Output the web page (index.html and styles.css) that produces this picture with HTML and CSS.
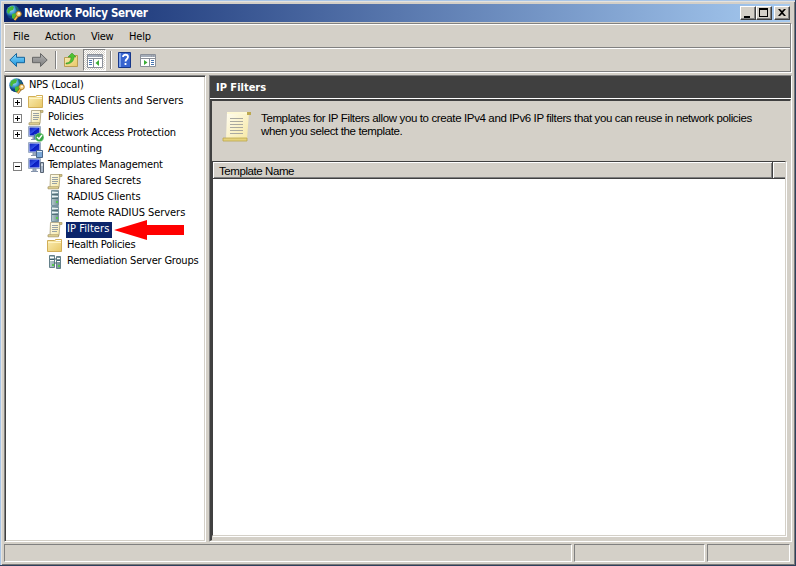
FILE: index.html
```html
<!DOCTYPE html>
<html lang="en">
<head>
<meta charset="utf-8">
<title>Network Policy Server</title>
<link rel="stylesheet" href="styles.css">
</head>
<body>
<svg class="defs" aria-hidden="true">
<defs>
<linearGradient id="paper" x2="1" y2="1"><stop stop-color="#fffdf0"/><stop offset="1" stop-color="#f6e8a4"/></linearGradient>
<linearGradient id="folder" x2="1" y2="1"><stop stop-color="#fbeeb4"/><stop offset="1" stop-color="#e8c766"/></linearGradient>
<linearGradient id="screen" x2="1" y2="1"><stop stop-color="#1020b8"/><stop offset=".45" stop-color="#2f50e8"/><stop offset=".5" stop-color="#0a1cc0"/><stop offset="1" stop-color="#2038d8"/></linearGradient>
<linearGradient id="steel" x2="1"><stop stop-color="#b8ccd0"/><stop offset="1" stop-color="#708c94"/></linearGradient>
<radialGradient id="sea" cx=".35" cy=".3"><stop stop-color="#b8e4f8"/><stop offset=".6" stop-color="#3c98d0"/><stop offset="1" stop-color="#0c4480"/></radialGradient>
<linearGradient id="blue" y2="1" x2="0"><stop stop-color="#8fdcfc"/><stop offset="1" stop-color="#1590dc"/></linearGradient>
<linearGradient id="grey" y2="1" x2="0"><stop stop-color="#b4b4b4"/><stop offset="1" stop-color="#7c7c7c"/></linearGradient>
<symbol id="globe" viewBox="0 0 16 16"><circle cx="7.3" cy="7.3" r="7" fill="url(#sea)"/><path d="M2 3l4-2 2 1-1 3-3 1-1 3-2-2zM6 9l4-1 1 3-3 3-2-1z" fill="#48b838"/><path d="M9 1l3 2 1 3-3-1z" fill="#1c6c70"/><path d="M8.500 15l3.500-4.500" stroke="#805008" stroke-width="2.800"/><path d="M8.500 15l3.500-4.500" stroke="#f0bc50" stroke-width="1.600"/><circle cx="12.600" cy="9" r="2.700" fill="#f8d078" stroke="#a06c18" stroke-width=".8"/><circle cx="13" cy="8.500" r=".9" fill="#fff"/></symbol>
<symbol id="dir" viewBox="0 0 16 16"><path d="M.5 2.500v11h14v-12h-6l-1 1z" fill="url(#folder)" stroke="#d1ae57"/><path d="M9 2.500h5" stroke="#fff"/><path d="M1 4.500h13" stroke="#fff4c4"/></symbol>
<symbol id="scroll" viewBox="0 0 16 16"><path d="M3.500 .5h9.500l-1 13h-9z" fill="url(#paper)" stroke="#a69c76" stroke-width=".8"/><path d="M12.500 .4h2.500v2h-2.500z" fill="#d8c680" stroke="#a39362" stroke-width=".7"/><path d="M1 12.800h10.500v2H1z" fill="#eddf9a" stroke="#a39362" stroke-width=".8"/><path d="M5 3.500h6M5 5.500h6M5 7.500h6M5 9.500h5" stroke="#8c98a0" stroke-width=".9"/></symbol>
<symbol id="pc" viewBox="0 0 16 16"><path d="M.5 .5h12v10H.5z" fill="#dce4f0" stroke="#9cacc4"/><path d="M1.500 1.500h10v8h-10z" fill="url(#screen)"/><path d="M3 13.500h7M5 11h3v2H5z" stroke="#8494ac" fill="#b8c4d4"/></symbol>
<symbol id="access" viewBox="0 0 16 16"><use href="#pc" width="16" height="16"/><path d="M6 8h5v5H6z" fill="#4878b8"/><circle cx="11.500" cy="11.300" r="4.300" fill="#35a746" stroke="#99d59a" stroke-width=".6"/><path d="M9 11l2 2 3-4" stroke="#fff" stroke-width="1.400" fill="none"/></symbol>
<symbol id="account" viewBox="0 0 16 16"><use href="#pc" width="16" height="16"/><path d="M8.500 8.500h6v7h-6z" fill="#7ca8d8" stroke="#48658c"/><path d="M9 9.500h5" stroke="#dcecfa"/></symbol>
<symbol id="manage" viewBox="0 0 16 16"><use href="#pc" width="16" height="16"/><path d="M12.500 4.500h3v10h-3z" fill="#a7b5c8" stroke="#586474"/><path d="M13 7h2" stroke="#fff"/></symbol>
<symbol id="server" viewBox="0 0 16 16"><path d="M4.500 .5h7v15h-7z" fill="url(#steel)" stroke="#7894a0"/><path d="M5 2.500h6M5 6.500h6" stroke="#e9f3f4"/><path d="M5 4.500h6M5 8.500h6" stroke="#527078"/><path d="M9 11h2v2H9z" fill="#57c94d"/></symbol>
<symbol id="servers" viewBox="0 0 16 16"><path d="M2.500 1.500h5v12h-5zM9.500 2.500h4v12h-4z" fill="url(#steel)" stroke="#64808a"/><path d="M3 3.500h4M3 6.500h4M10 4.500h3M10 7.500h3" stroke="#fff"/><path d="M3 5.500h4M10 6.500h3M7.500 5h2M7.500 9h2" stroke="#40606a"/><path d="M5 10h2v2H5zM11 11h2v2h-2z" fill="#57c94d"/></symbol>
<symbol id="arrow" viewBox="0 0 16 16"><path d="M.8 8l6.700-6.500v3.800h8v5.400h-8v3.800z"/></symbol>
</defs>
</svg>
<div class="window">
<header class="title"><svg class="icon"><use href="#globe"/></svg><h1>Network Policy Server</h1>
<div class="controls"><button><svg viewBox="0 0 14 12"><path d="M3 9h6v2H3z"/></svg></button><button><svg viewBox="0 0 14 12"><path d="M2 1h9v9H2zm1 2v6h7V3z" fill-rule="evenodd"/></svg></button><button class="close"><svg viewBox="0 0 14 12"><path d="M3 2h2l2 2 2-2h2L8 5.500 11 9H9L7 7 5 9H3l3-3.500z"/></svg></button></div></header>
<div class="bars">
<nav class="menu"><span>File</span><span>Action</span><span>View</span><span>Help</span></nav>
<div class="tools">
<svg class="icon back"><use href="#arrow"/></svg><svg class="icon forward"><use href="#arrow"/></svg><i class="sep"></i>
<svg class="icon up" viewBox="0 0 16 16"><path d="M1.500 5.500v9h13v-11h-6l-1 2z" fill="url(#folder)" stroke="#ba9d54"/><path d="M3 11c4 0 5-3 5-6H5l4-4 4 4h-2c0 4-3 7-8 7z" fill="#4dc331" stroke="#278b22" stroke-width=".5"/></svg>
<span class="pressed"><svg class="icon" viewBox="0 0 16 16"><path d="M.5 1.500h15v13H.5z" fill="#fff" stroke="#8a8f98"/><path d="M1 2h14v2H1z" fill="#a4acb8"/><path d="M1 5.500h14M6.500 6v8M11 3h1m1 0h1" stroke="#8a8f98"/><path d="M2 7.500h3M2 9.500h3M2 11.500h3" stroke="#4775b1"/><path d="M12 7v6L8.500 10z" fill="#3aac35"/></svg></span><i class="sep second"></i>
<svg class="icon help" viewBox="0 0 16 16"><path d="M1.500 .5h12v15h-12z" fill="#3864cf" stroke="#173789"/><path d="M2 1h2v14H2z" fill="#7ba2ec"/><path d="M6 5c0-3 5-3 5 0 0 2-2.500 2-2.500 4.500M8.500 11v2" fill="none" stroke="#fff" stroke-width="1.800"/></svg>
<svg class="icon pane" viewBox="0 0 16 16"><path d="M.5 2.500h15v12H.5z" fill="#fff" stroke="#8a8f98"/><path d="M1 3h14v2H1z" fill="#a4acb8"/><path d="M1 6.500h14M9.500 7v7M11 4h1m1 0h1" stroke="#8a8f98"/><path d="M11 8.500h3M11 10.500h3M11 12.500h3" stroke="#4775b1"/><path d="M4 8v5l3.500-2.500z" fill="#3aac35"/></svg>
</div></div>
<main>
<aside>
<div class="row root"><svg class="icon"><use href="#globe"/></svg><span class="tight">NPS (Local)</span></div>
<div class="row"><b class="box plus"></b><svg class="icon"><use href="#dir"/></svg><span class="snug">RADIUS Clients and Servers</span></div>
<div class="row"><b class="box plus"></b><svg class="icon"><use href="#scroll"/></svg><span class="tight">Policies</span></div>
<div class="row"><b class="box plus"></b><svg class="icon"><use href="#access"/></svg><span class="tight">Network Access Protection</span></div>
<div class="row"><b class="gap"></b><svg class="icon"><use href="#account"/></svg><span class="tight">Accounting</span></div>
<div class="row"><b class="box"></b><svg class="icon"><use href="#manage"/></svg><span class="tighter">Templates Management</span></div>
<div class="row child"><svg class="icon"><use href="#scroll"/></svg><span class="snug">Shared Secrets</span></div>
<div class="row child"><svg class="icon"><use href="#server"/></svg><span class="snug">RADIUS Clients</span></div>
<div class="row child"><svg class="icon"><use href="#server"/></svg><span class="snug">Remote RADIUS Servers</span></div>
<div class="row child"><svg class="icon"><use href="#scroll"/></svg><span class="selected">IP Filters</span><svg class="pointer" viewBox="0 0 70 20"><path d="M0 10L33 0v5h37v10H33v5z"/></svg></div>
<div class="row child"><svg class="icon"><use href="#dir"/></svg><span class="tightest">Health Policies</span></div>
<div class="row child"><svg class="icon"><use href="#servers"/></svg><span class="tighter">Remediation Server Groups</span></div>
</aside>
<section>
<h2>IP Filters</h2>
<div class="panel"><div class="intro"><svg viewBox="0 0 32 32"><path d="M5 2h22l-2 26H4z" fill="url(#paper)"/><path d="M5 2h21" stroke="#fff9d4" stroke-width="2"/><path d="M25 1h4v3h-4z" fill="#bda950"/><path d="M1 27h24v3H1z" fill="#e5d27c" stroke="#bba64d" stroke-width=".8"/><path d="M8 7.500h13M8 10.500h13M8 13.500h13M8 16.500h13M8 19.500h13M8 22.500h13" stroke="#aaa9a0"/></svg><p>Templates for IP Filters allow you to create IPv4 and IPv6 IP filters that you can reuse in network policies<br>when you select the template.</p></div>
<div class="list"><div class="columns"><span>Template Name</span><i></i></div></div></div>
</section>
</main>
<footer><i></i><i></i><i></i></footer>
</div>
</body>
</html>
```
FILE: styles.css
```css
* { box-sizing: border-box; }
body { margin: 0; width: 796px; height: 566px; overflow: hidden; background: #2d405c; font: 11px "DejaVu Sans Condensed", "DejaVu Sans", sans-serif; color: #000; }
.defs { position: absolute; width: 0; height: 0; }
.icon { width: 16px; height: 16px; flex: none; }
.window { width: 795px; height: 565px; background: #d4d0c8; border-top: 1px solid #a9c6e8; border-left: 1px solid #a9c6e8; padding: 3px 3px 0 3px; box-shadow: inset 1px 1px #e5e3df, inset -1px -1px #777; }
.title { height: 18px; margin-right: 2px; background: linear-gradient(90deg, #0a246a, #a6caf0); display: flex; align-items: center; padding-left: 2px; }
h1 { margin: 0 0 0 2px; color: #fff; font-family: "DejaVu Sans Condensed", sans-serif; font-size: 11.500px; line-height: 17px; letter-spacing: -.28px; }
.controls { display: flex; margin: 0 0 0 auto; }
button { width: 16px; height: 14px; padding: 0; border: 1px solid; border-color: #fff #404040 #404040 #fff; background: #d4d0c8; box-shadow: inset -1px -1px #808080; display: block; }
button svg { width: 14px; height: 12px; display: block; }
button.close { margin-left: 2px; }
.bars { height: 49px; margin: 1px 1px 0 0; border: 1px solid; border-color: #808080 #808080 #808080 #fff; box-shadow: 1px 1px #fff; }
.menu { height: 25px; display: flex; align-items: center; padding-left: 8px; border-bottom: 1px solid #fff; box-shadow: inset 0 1px #fff, inset 0 -1px #808080; }
.menu span:nth-child(1) { width: 32px; }
.menu span:nth-child(2) { width: 46px; letter-spacing: -.1px; }
.menu span:nth-child(3) { width: 38px; letter-spacing: -.3px; }
.menu span:nth-child(4) { letter-spacing: -.2px; }
.tools { height: 22px; display: flex; align-items: center; padding-left: 4px; }
.back { fill: url(#blue); stroke: #17659c; }
.forward { margin-left: 7px; fill: url(#grey); stroke: #666; transform: scaleX(-1); }
.sep { width: 2px; height: 18px; margin: 0 6px 0 7px; border-left: 1px solid #808080; border-right: 1px solid #fff; }
.pressed { width: 23px; height: 22px; margin-left: 4px; padding: 2px 3px; border: 1px solid; border-color: #808080 #fff #fff #808080; background: repeating-conic-gradient(#fff 0 25%, #d4d0c8 0 50%) 0 0 / 2px 2px; }
.pressed .icon { display: block; margin-top: 1px; }
.second { margin: 0 5px 0 4px; }
.pane { margin-left: 7px; }
main { height: 467px; margin-top: 3px; display: flex; gap: 3px; }
aside { width: 202px; flex: none; background: #fff; border: 1px solid; border-color: #808080 #fff #fff #808080; box-shadow: inset 1px 1px #404040, inset -1px -1px #d4d0c8; padding: 2px 0 0 4px; }
.row { height: 16px; display: flex; align-items: center; white-space: nowrap; padding-left: 3px; }
.row span { height: 16px; line-height: 14px; padding: 0 2px 0 1px; margin-left: 3px; }
.root { padding: 0; }
.snug { letter-spacing: -.05px; }
.tight { letter-spacing: -.14px; }
.tighter { letter-spacing: -.19px; }
.tightest { letter-spacing: -.26px; }
.box { width: 9px; height: 9px; flex: none; margin: 0 6px 0 1px; border: 1px solid #808080; background: linear-gradient(#000, #000) center / 5px 1px no-repeat; }
.plus { background: linear-gradient(#000, #000) center / 5px 1px no-repeat, linear-gradient(#000, #000) center / 1px 5px no-repeat; }
.gap { width: 16px; }
.child { padding-left: 38px; }
.row .selected { width: 46px; background: #0a246a; color: #fff; letter-spacing: .08px; }
.pointer { width: 70px; height: 20px; fill: #f00; margin-left: 2px; flex: none; }
section { width: 583px; flex: none; height: 467px; display: flex; flex-direction: column; border: solid; border-width: 1px; border-color: #808080 #fff #fff #808080; }
h2 { margin: 0; height: 23px; background: #404040; color: #fff; padding-left: 6px; font: bold 11px/23px "DejaVu Sans Condensed", sans-serif; border-bottom: 1px solid #fff; flex: none; }
.panel { flex: 1; border: solid; border-width: 2px 1px 1px 2px; border-color: #404040 #d4d0c8 #d4d0c8 #404040; display: flex; flex-direction: column; min-height: 0; }
.intro { height: 60px; flex: none; display: flex; padding: 10px 0 0 10px; }
.intro svg { width: 32px; height: 32px; flex: none; }
p { margin: 1px 0 0 7px; font: 11.500px/13px "Liberation Sans", sans-serif; letter-spacing: -.37px; white-space: nowrap; }
.list { flex: 1; margin: 0 4px 4px 0; background: #fff; border: 1px solid; border-color: #404040 #d4d0c8 #d4d0c8 #404040; box-shadow: 1px 1px #fff; }
.columns { height: 17px; display: flex; background: #d4d0c8; border-bottom: 1px solid #404040; box-shadow: inset 0 1px #fff, inset 0 -1px #808080; font: 11.500px/18px "Liberation Sans", sans-serif; letter-spacing: -.42px; }
.columns span { width: 560px; padding-left: 6px; border-right: 1px solid #404040; box-shadow: inset 1px 1px #fff, inset -1px -1px #808080; }
.columns i { flex: 1; border-left: 1px solid #fff; }
footer { height: 18px; margin-top: 2px; display: grid; grid-template-columns: 568px 131px 83px; gap: 2px; }
footer i { border: 1px solid; border-color: #808080 #fff #fff #808080; }
```
